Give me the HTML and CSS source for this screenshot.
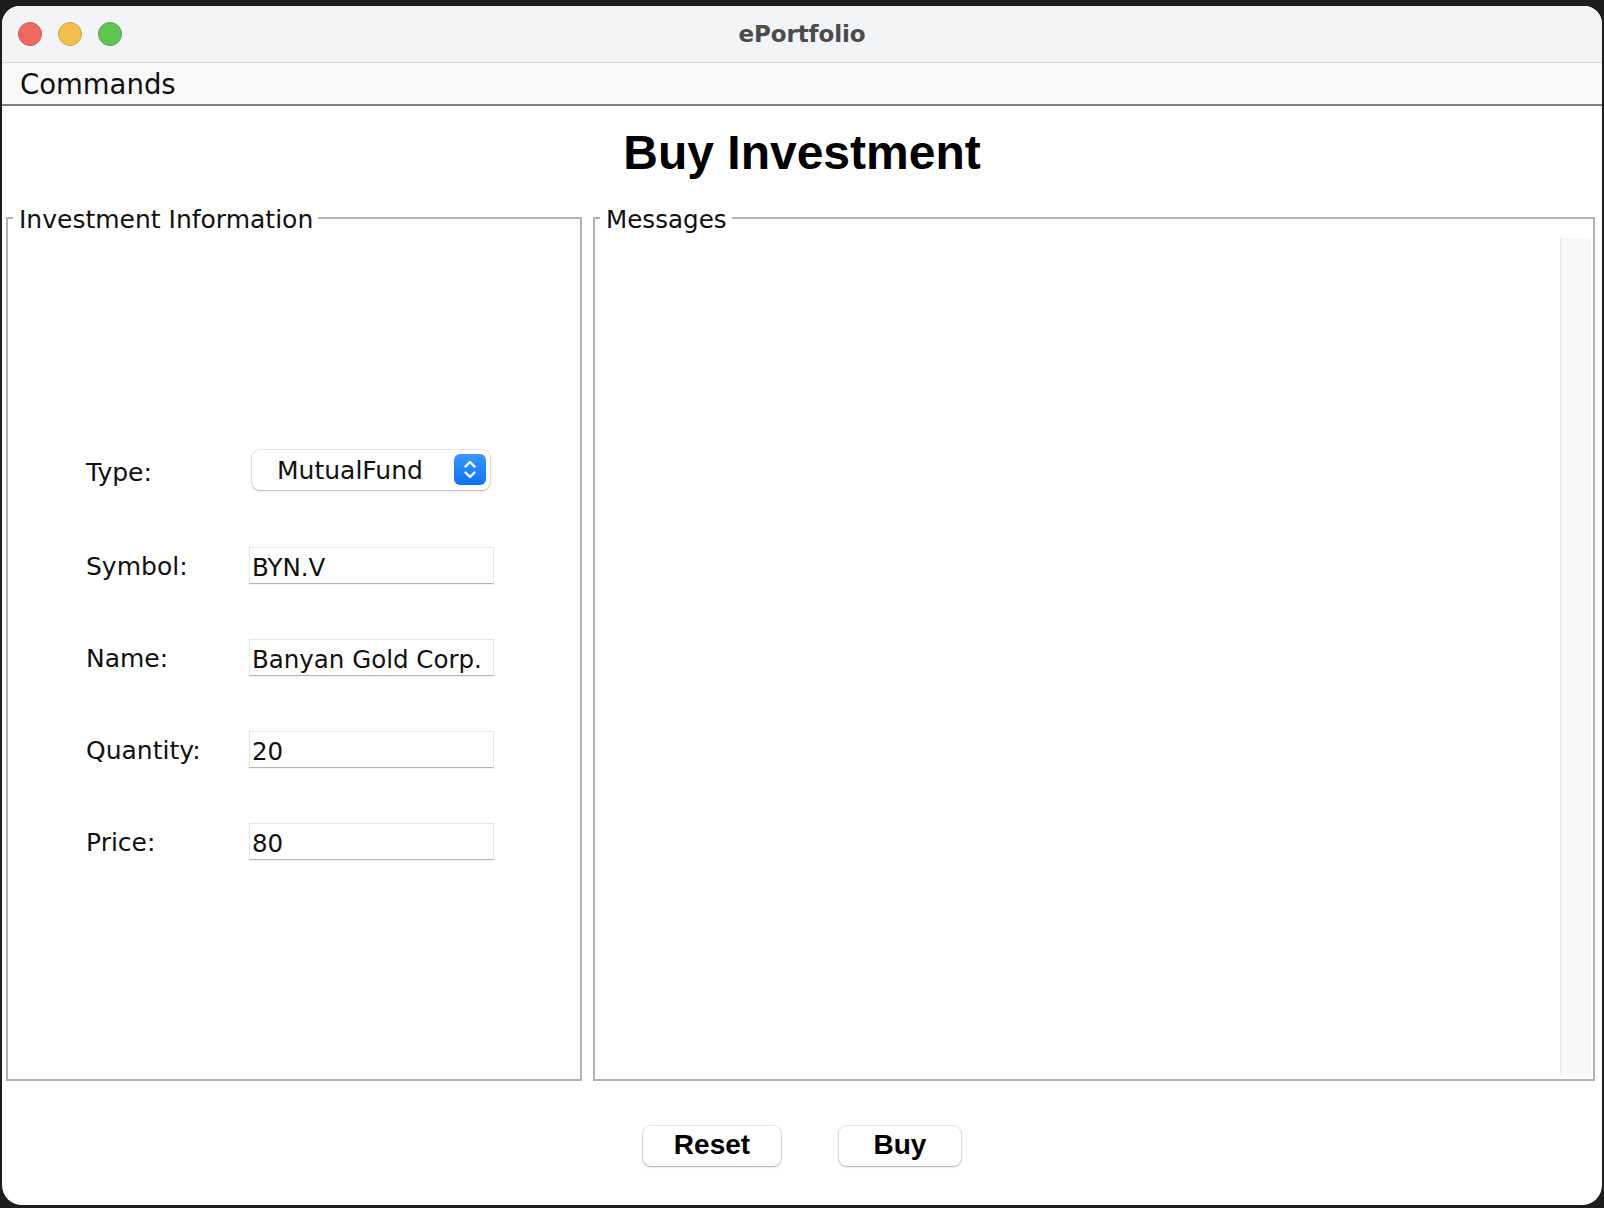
FILE: index.html
```html
<!DOCTYPE html>
<html lang="en">
<head>
<meta charset="utf-8">
<title>ePortfolio</title>
<link rel="stylesheet" href="styles.css">
</head>
<body>
<div class="window">
  <header class="titlebar">
    <div class="lights">
      <span class="light red"></span>
      <span class="light yellow"></span>
      <span class="light green"></span>
    </div>
    <div class="title">ePortfolio</div>
    <div></div>
  </header>
  <nav class="menubar"><span class="menu-item">Commands</span></nav>
  <main class="content">
    <h1 class="heading">Buy Investment</h1>
    <div class="panels">
      <fieldset class="group info">
        <legend class="group-title">Investment Information</legend>
        <div class="form-wrap">
          <div class="form">
            <span class="label">Type:</span>
            <div class="combo">
              <span class="combo-text">MutualFund</span>
              <span class="combo-btn">
                <svg width="32" height="31" viewBox="0 0 32 31" aria-hidden="true">
                  <path d="M11.5 12.5 L16 8 L20.5 12.5" fill="none" stroke="#fff" stroke-width="2.4" stroke-linecap="round" stroke-linejoin="round"/>
                  <path d="M11.5 18.5 L16 23 L20.5 18.5" fill="none" stroke="#fff" stroke-width="2.4" stroke-linecap="round" stroke-linejoin="round"/>
                </svg>
              </span>
            </div>
            <span class="label">Symbol:</span>
            <div class="field">BYN.V</div>
            <span class="label">Name:</span>
            <div class="field">Banyan Gold Corp.</div>
            <span class="label">Quantity:</span>
            <div class="field">20</div>
            <span class="label">Price:</span>
            <div class="field">80</div>
          </div>
        </div>
      </fieldset>
      <fieldset class="group messages">
        <legend class="group-title">Messages</legend>
        <div class="msg-area">
          <div class="track"></div>
        </div>
      </fieldset>
    </div>
    <div class="actions">
      <button class="btn btn-reset" type="button">Reset</button>
      <button class="btn btn-buy" type="button">Buy</button>
    </div>
  </main>
</div>
</body>
</html>
```
FILE: styles.css
```css
html, body {
  margin: 0;
  padding: 0;
}
body {
  background: #1d1d1f;
  width: 1604px;
  height: 1208px;
  overflow: hidden;
  font-family: "DejaVu Sans", "Liberation Sans", sans-serif;
  color: #000;
}
.window {
  margin: 6px 0 0 2px;
  width: 1600px;
  height: 1199px;
  background: #fff;
  border-radius: 18px 18px 20px 20px;
  overflow: hidden;
  display: flex;
  flex-direction: column;
}
.titlebar {
  height: 56px;
  flex: none;
  display: grid;
  grid-template-columns: 1fr auto 1fr;
  align-items: center;
  background: #f3f4f5;
  border-bottom: 1px solid #d6d6d6;
}
.lights {
  display: flex;
  gap: 16px;
  padding-left: 16px;
}
.light {
  width: 24px;
  height: 24px;
  border-radius: 50%;
  box-sizing: border-box;
}
.red { background: #ee6a5f; border: 1px solid #d5574c; }
.yellow { background: #f5bf4f; border: 1px solid #d9a23e; }
.green { background: #61c554; border: 1px solid #51a744; }
.title {
  font-family: "DejaVu Sans", sans-serif;
  font-weight: bold;
  font-size: 23px;
  color: #4b4b4b;
  letter-spacing: -0.1px;
}
.menubar {
  height: 41px;
  flex: none;
  display: flex;
  align-items: center;
  background: #f9f9f9;
  border-bottom: 2px solid #808080;
  padding-left: 18px;
}
.menu-item {
  font-size: 27.5px;
  color: #111;
}
.content {
  flex: 1;
  display: flex;
  flex-direction: column;
  min-height: 0;
}
.heading {
  margin: 19px 0 0;
  font-family: "Liberation Sans", Arial, sans-serif;
  font-weight: bold;
  font-size: 48px;
  line-height: 56px;
  text-align: center;
  color: #000;
}
.panels {
  flex: 1;
  min-height: 0;
  display: flex;
  gap: 11px;
  margin-top: 21px;
  padding: 0 7px 0 4px;
}
.group {
  margin: 0;
  padding: 0;
  min-width: 0;
  border: 2px solid #b3b3b3;
  display: flex;
  flex-direction: column;
}
.info { width: 576px; box-sizing: border-box; flex: none; }
.messages { flex: 1; box-sizing: border-box; }
.group-title {
  margin-left: 5px;
  padding: 3px 5px 0 6px;
  font-size: 25px;
  line-height: 29px;
  color: #111;
}
.messages .group-title { margin-left: 5px; font-size: 24.6px; }
.form-wrap {
  flex: 1;
  display: flex;
  align-items: center;
  padding-left: 78px;
  padding-bottom: 4px;
}
.form {
  display: grid;
  grid-template-columns: 163px 245px;
  row-gap: 55px;
  align-items: center;
}
.label {
  font-size: 25px;
  color: #111;
  padding-top: 3px;
}
.combo {
  margin: 0 4px 2px 3px;
  height: 40px;
  box-sizing: border-box;
  background: #fff;
  border-radius: 8px;
  box-shadow: 0 0 0 1px rgba(0,0,0,0.09), 0 1px 2px rgba(0,0,0,0.22);
  display: flex;
  align-items: center;
  justify-content: space-between;
  padding: 0 4px 0 25px;
}
.combo-text {
  font-size: 25px;
  color: #111;
  padding-top: 2px;
}
.combo-btn {
  width: 32px;
  height: 31px;
  border-radius: 6px;
  background: linear-gradient(#3c97ff, #0a72f5);
  display: flex;
}
.field {
  height: 37px;
  box-sizing: border-box;
  border: 1px solid #e6e6e6;
  border-bottom-color: #b5b5b5;
  box-shadow: 0 1px 0 rgba(0,0,0,0.05);
  padding: 2px 2px 0;
  font-size: 24.5px;
  line-height: 35px;
  color: #111;
  white-space: nowrap;
  overflow: hidden;
}
.msg-area {
  flex: 1;
  display: flex;
  justify-content: flex-end;
  padding: 4px 3px 5px 0;
}
.track {
  width: 30px;
  box-sizing: border-box;
  background: #f8f8f8;
  border-left: 1px solid #e4e4e4;
  border-right: 1px solid #ececec;
}
.actions {
  flex: none;
  display: flex;
  justify-content: center;
  gap: 58px;
  padding: 45px 0 39px;
}
.btn {
  height: 40px;
  border: none;
  border-radius: 8px;
  background: #fff;
  box-shadow: 0 0 0 1px rgba(0,0,0,0.09), 0 1px 2px rgba(0,0,0,0.25);
  font-family: "Liberation Sans", Arial, sans-serif;
  font-weight: bold;
  font-size: 28px;
  color: #000;
  padding: 0 0 2px;
}
.btn-reset { width: 138px; }
.btn-buy { width: 122px; }
```
